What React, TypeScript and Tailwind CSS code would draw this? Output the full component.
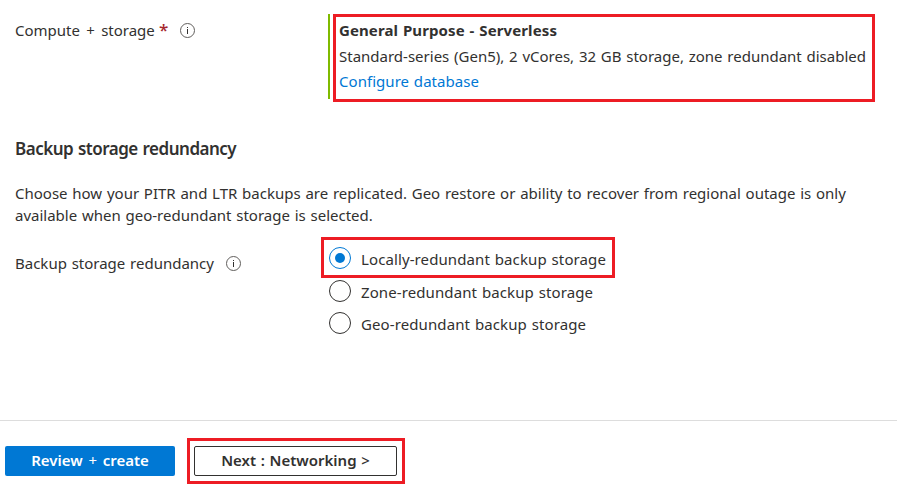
import React from "react";

function InfoIcon() {
  return (
    <svg className="block h-[15px] w-[15px] shrink-0" viewBox="0 0 15 15" fill="none">
      <circle cx="7.5" cy="7.5" r="7" stroke="#605e5c" strokeWidth="1" />
      <path d="M7.5 6V11" stroke="#323130" strokeWidth="1" />
      <path d="M7.5 4V5" stroke="#323130" strokeWidth="1" />
    </svg>
  );
}

function Radio({ label, checked = false }: { label: string; checked?: boolean }) {
  return (
    <label className="flex h-[22px] items-center gap-2.5">
      <span
        className={`flex h-[22px] w-[22px] shrink-0 items-center justify-center rounded-full border ${
          checked ? "border-[#0078d4]" : "border-[#323130]"
        }`}
      >
        {checked && <span className="h-2.5 w-2.5 rounded-full bg-[#0078d4]" />}
      </span>
      <span className="pt-0.5 tracking-[0.1px]">{label}</span>
    </label>
  );
}

export default function App() {
  return (
    <div className="h-[488px] w-[897px] overflow-hidden whitespace-nowrap bg-white font-['Noto_Sans',sans-serif] text-[15px] leading-[22px] text-[#323130] [word-spacing:0.86px]">
      <section className="flex h-[102px] pt-[14px]">
        <div className="flex h-[33px] w-[328px] items-center pl-[15px]">
          <span className="w-[140px] pb-0.5 [word-spacing:2.4px]">Compute + storage</span>
          <span className="ml-1 w-[9px] pb-0.5 text-[17px] font-medium text-[#a4262c]">*</span>
          <span className="ml-3">
            <InfoIcon />
          </span>
        </div>
        <div className="h-[85px] w-0.5 bg-[#7fba00]" />
        <div className="ml-[3px] h-[88px] w-[542px] border-[3px] border-[#ed1c24] pl-[3px] pt-[2px]">
          <p className="font-bold tracking-[0.1px]">General Purpose - Serverless</p>
          <p className="mt-1">Standard-series (Gen5), 2 vCores, 32 GB storage, zone redundant disabled</p>
          <p className="mt-[3px] tracking-[0.04px] text-[#0078d4]">Configure database</p>
        </div>
      </section>

      <section className="pl-[15px] pt-[36px]">
        <h2 className="text-[17px] font-semibold leading-[22px] tracking-[-0.5px]">Backup storage redundancy</h2>
        <p className="mt-[22px]">
          Choose how your PITR and LTR backups are replicated. Geo restore or ability to recover from regional outage is only
          <br />
          available when geo-redundant storage is selected.
        </p>
      </section>

      <section className="flex h-[194px] pt-[11px]">
        <div className="flex h-[53px] w-[321px] items-center pl-[15px]">
          <span className="w-[199px] pb-0.5">Backup storage redundancy</span>
          <span className="ml-3">
            <InfoIcon />
          </span>
        </div>
        <div>
          <div className="flex h-[41px] w-[294px] items-center border-[3px] border-[#ed1c24] pl-[5px]">
            <Radio label="Locally-redundant backup storage" checked />
          </div>
          <div className="mt-[2px] flex flex-col gap-2.5 pl-2">
            <Radio label="Zone-redundant backup storage" />
            <Radio label="Geo-redundant backup storage" />
          </div>
        </div>
      </section>

      <footer className="flex border-t border-[#dddddd] pl-[5px] pt-[17px]">
        <button className="mt-2 h-[30px] w-[170px] rounded-[2px] bg-[#0078d4] pb-0.5 font-semibold text-white [word-spacing:1.8px]">
          Review <span className="font-normal">+</span> create
        </button>
        <div className="ml-3 h-[46px] w-[218px] border-[3px] border-[#ed1c24] pl-1 pt-[5px]">
          <button className="block h-[30px] w-[203px] rounded-[2px] border border-[#323130] pb-0.5 font-semibold [word-spacing:0.8px]">
            Next : Networking <span className="font-medium">&gt;</span>
          </button>
        </div>
      </footer>
    </div>
  );
}
